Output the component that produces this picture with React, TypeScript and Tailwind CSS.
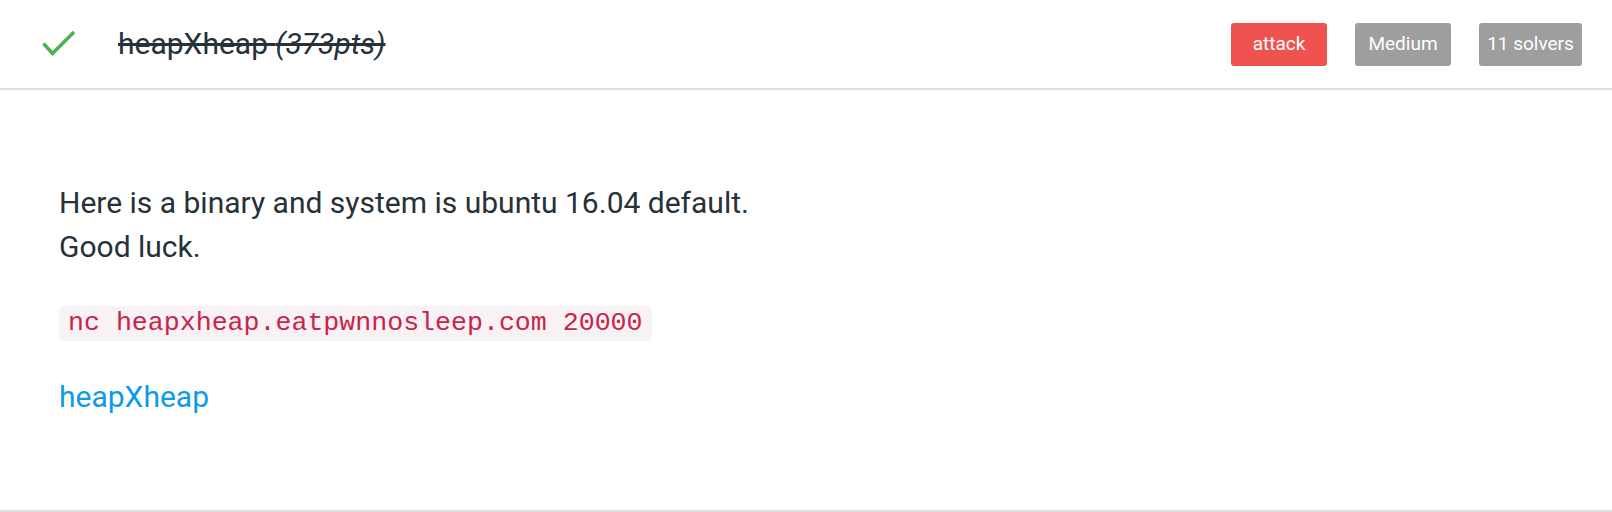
export default function App() {
  return (
    <div className="flex h-[512px] w-[1612px] flex-col bg-white font-['Roboto',sans-serif] text-[#263238]">
      <div className="flex h-[90px] shrink-0 items-center border-b-2 border-[#dddddd] pl-[41px] pr-[30px]">
        <svg width="36" height="28" viewBox="0 0 36 28" className="shrink-0">
          <path d="M2.5 13.5 L11.5 23.5 L33 2" fill="none" stroke="#4caf50" strokeWidth="3.4" />
        </svg>
        <h1 className="ml-[41px] text-[30px] leading-none line-through">
          heapXheap <em>(373pts)</em>
        </h1>
        <div className="ml-auto flex gap-[28px] text-[19px]">
          <span className="flex h-[43px] w-[96px] items-center justify-center rounded-[3px] bg-[#ef5350] text-white">
            attack
          </span>
          <span className="flex h-[43px] w-[96px] items-center justify-center rounded-[3px] bg-[#9e9e9e] text-white">
            Medium
          </span>
          <span className="flex h-[43px] w-[103px] items-center justify-center rounded-[3px] bg-[#9e9e9e] text-white">
            11 solvers
          </span>
        </div>
      </div>
      <div className="flex flex-1 flex-col items-start border-b-2 border-[#dddddd] px-[59px] pt-[91px]">
        <p className="text-[30px] leading-[44px]">
          Here is a binary and system is ubuntu 16.04 default.
          <br />
          Good luck.
        </p>
        <code className="mt-[37px] rounded-[6px] bg-[#f9f2f4] px-[9px] py-[4px] font-['Liberation_Mono',monospace] text-[26.6px] leading-[27px] text-[#c7254e]">
          nc heapxheap.eatpwnnosleep.com 20000
        </code>
        <a href="#" className="mt-[34px] text-[30px] leading-[44px] text-[#0d9be6]">
          heapXheap
        </a>
      </div>
    </div>
  );
}
